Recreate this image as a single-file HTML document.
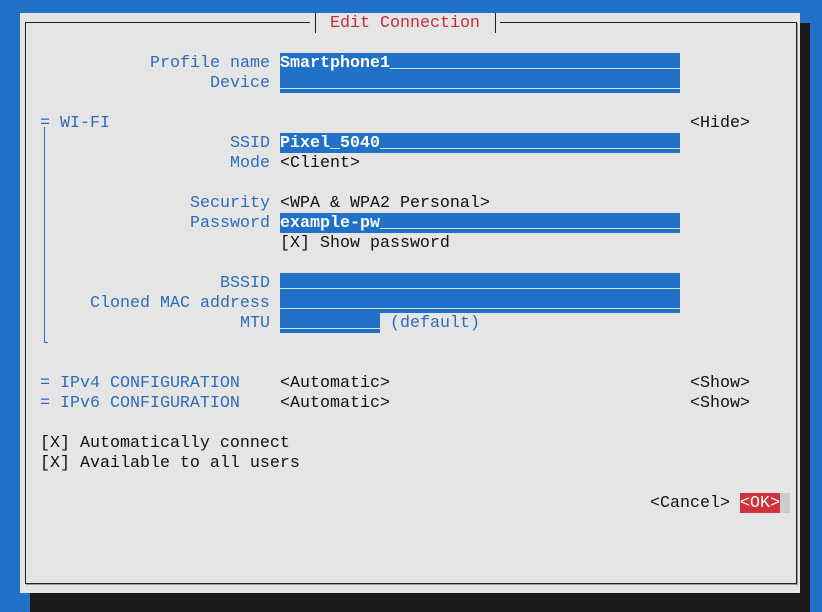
<!DOCTYPE html>
<html><head><meta charset="utf-8"><style>
body{margin:0;width:822px;height:612px;background:#2271c8;position:relative;overflow:hidden;font-family:"Liberation Mono","DejaVu Sans Mono",monospace;font-size:16.667px;}
.sh{position:absolute;left:30px;top:23px;width:780px;height:589px;background:#1a1a1a}
.dlg{position:absolute;left:20px;top:13px;width:780px;height:580px;background:#e5e5e5}
.frame{position:absolute;left:25px;top:22px;width:770px;height:560px;border:1px solid #222;box-shadow:1px 1px 0 #999}
.t{position:absolute;height:19px;padding-top:1px;line-height:20px;white-space:pre;color:#111;overflow:hidden}
.l{color:#2d6cb9}
.f{background:#2271c8;color:#fff}
.r{color:#c8283a}
</style></head><body>
<div class="sh"></div>
<div class="dlg"></div>
<div class="frame"></div>
<div class="t" style="left:310px;top:13px;background:#e5e5e5;width:190px;"></div>
<div style="position:absolute;left:315px;top:13px;width:1px;height:20px;background:#222"></div>
<div style="position:absolute;left:495px;top:13px;width:1px;height:20px;background:#222"></div>
<div class="t r" style="left:330px;top:13px">Edit Connection</div>

<div class="t l" style="left:150px;top:53px">Profile name</div>
<div class="t f" style="left:280px;top:53px"><b>Smartphone1</b>_____________________________</div>
<div class="t l" style="left:210px;top:73px">Device</div>
<div class="t f" style="left:280px;top:73px">________________________________________</div>

<div class="t l" style="left:40px;top:113px">= WI-FI</div>
<div style="position:absolute;left:44px;top:127px;width:1px;height:215px;background:#2d6cb9"></div>
<div style="position:absolute;left:44px;top:342px;width:4px;height:1px;background:#2d6cb9"></div>
<div class="t" style="left:690px;top:113px">&lt;Hide&gt;</div>
<div class="t l" style="left:230px;top:133px">SSID</div>
<div class="t f" style="left:280px;top:133px"><b>Pixel_5040</b>______________________________</div>
<div class="t l" style="left:230px;top:153px">Mode</div>
<div class="t" style="left:280px;top:153px">&lt;Client&gt;</div>
<div class="t l" style="left:190px;top:193px">Security</div>
<div class="t" style="left:280px;top:193px">&lt;WPA &amp; WPA2 Personal&gt;</div>
<div class="t l" style="left:190px;top:213px">Password</div>
<div class="t f" style="left:280px;top:213px"><b>example-pw</b>______________________________</div>
<div class="t" style="left:280px;top:233px">[X] Show password</div>
<div class="t l" style="left:220px;top:273px">BSSID</div>
<div class="t f" style="left:280px;top:273px">________________________________________</div>
<div class="t l" style="left:90px;top:293px">Cloned MAC address</div>
<div class="t f" style="left:280px;top:293px">________________________________________</div>
<div class="t l" style="left:240px;top:313px">MTU</div>
<div class="t f" style="left:280px;top:313px">__________</div>
<div class="t l" style="left:390px;top:313px">(default)</div>

<div class="t l" style="left:40px;top:373px">= IPv4 CONFIGURATION</div>
<div class="t" style="left:280px;top:373px">&lt;Automatic&gt;</div>
<div class="t" style="left:690px;top:373px">&lt;Show&gt;</div>
<div class="t l" style="left:40px;top:393px">= IPv6 CONFIGURATION</div>
<div class="t" style="left:280px;top:393px">&lt;Automatic&gt;</div>
<div class="t" style="left:690px;top:393px">&lt;Show&gt;</div>

<div class="t" style="left:40px;top:433px">[X] Automatically connect</div>
<div class="t" style="left:40px;top:453px">[X] Available to all users</div>

<div class="t" style="left:650px;top:493px">&lt;Cancel&gt;</div>
<div class="t" style="left:740px;top:493px;background:#d0313a;color:#fff">&lt;OK&gt;</div>
<div style="position:absolute;left:780px;top:493px;width:10px;height:20px;background:#cccccc"></div>
</body></html>
